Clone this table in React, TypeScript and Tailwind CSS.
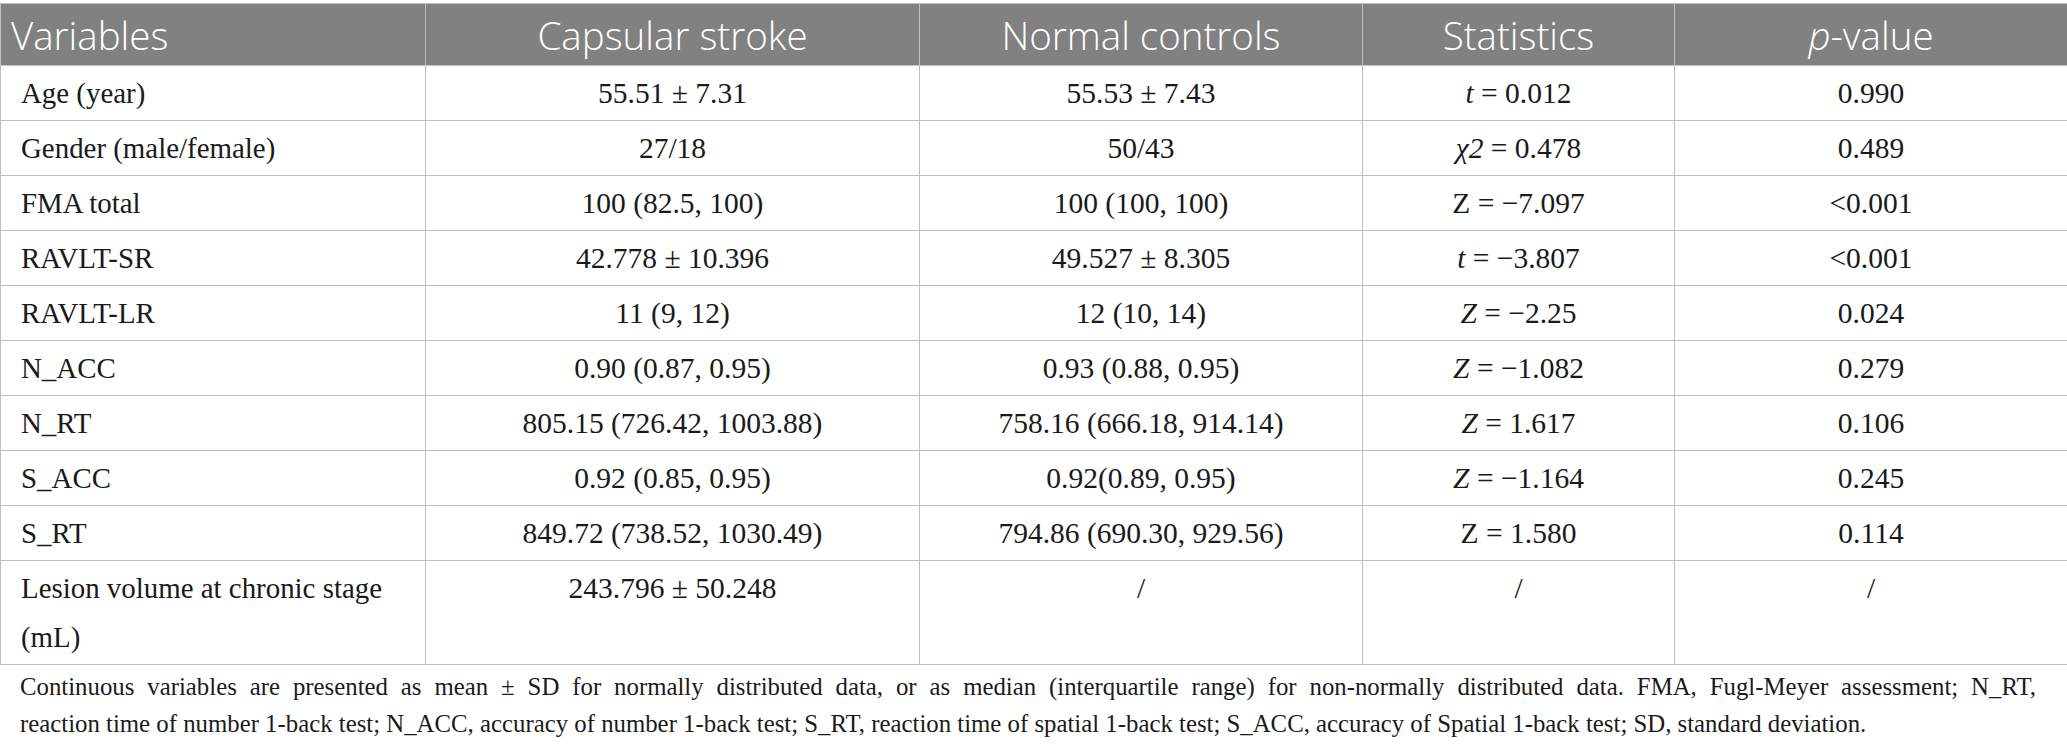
import React from "react";

type Row = { v: React.ReactNode; a: string; b: string; s: React.ReactNode; p: string };

const Ital = ({ children }: { children: React.ReactNode }) => <span className="italic">{children}</span>;

const rows: Row[] = [
  { v: "Age (year)", a: "55.51 ± 7.31", b: "55.53 ± 7.43", s: <><Ital>t</Ital> = 0.012</>, p: "0.990" },
  { v: "Gender (male/female)", a: "27/18", b: "50/43", s: <><Ital>χ2</Ital> = 0.478</>, p: "0.489" },
  { v: "FMA total", a: "100 (82.5, 100)", b: "100 (100, 100)", s: <>Z = −7.097</>, p: "<0.001" },
  { v: "RAVLT-SR", a: "42.778 ± 10.396", b: "49.527 ± 8.305", s: <><Ital>t</Ital> = −3.807</>, p: "<0.001" },
  { v: "RAVLT-LR", a: "11 (9, 12)", b: "12 (10, 14)", s: <><Ital>Z</Ital> = −2.25</>, p: "0.024" },
  { v: "N_ACC", a: "0.90 (0.87, 0.95)", b: "0.93 (0.88, 0.95)", s: <><Ital>Z</Ital> = −1.082</>, p: "0.279" },
  { v: "N_RT", a: "805.15 (726.42, 1003.88)", b: "758.16 (666.18, 914.14)", s: <><Ital>Z</Ital> = 1.617</>, p: "0.106" },
  { v: "S_ACC", a: "0.92 (0.85, 0.95)", b: "0.92(0.89, 0.95)", s: <><Ital>Z</Ital> = −1.164</>, p: "0.245" },
  { v: "S_RT", a: "849.72 (738.52, 1030.49)", b: "794.86 (690.30, 929.56)", s: <>Z = 1.580</>, p: "0.114" },
  { v: "Lesion volume at chronic stage (mL)", a: "243.796 ± 50.248", b: "/", s: "/", p: "/" },
];

export default function App() {
  const th = "border border-[#bfbfbf] h-[62px] align-middle font-light text-white text-[38.5px] leading-[42px]";
  const td = "border border-[#bfbfbf] align-top pt-[3px] pb-[2px] leading-[49px] text-[#1a1a1a]";
  return (
    <div className="w-[2067px] bg-white pt-[3px]">
      <table className="w-[2067px] table-fixed border-collapse">
        <colgroup>
          <col className="w-[425px]" />
          <col className="w-[494px]" />
          <col className="w-[443px]" />
          <col className="w-[312px]" />
          <col className="w-[393px]" />
        </colgroup>
        <thead>
          <tr className="bg-[#808180] [font-family:'Open_Sans',sans-serif]">
            <th className={`${th} text-left pl-[10px]`}>Variables</th>
            <th className={`${th} text-center`}>Capsular stroke</th>
            <th className={`${th} text-center`}>Normal controls</th>
            <th className={`${th} text-center`}>Statistics</th>
            <th className={`${th} text-center`}>
              <span className="italic">p</span>-value
            </th>
          </tr>
        </thead>
        <tbody className="[font-family:'Liberation_Serif',serif]">
          {rows.map((r, i) => (
            <tr key={i}>
              <td className={`${td} text-left pl-[20px] pr-[10px] text-[28.9px]`}>{r.v}</td>
              <td className={`${td} text-center text-[29.5px]`}>{r.a}</td>
              <td className={`${td} text-center text-[29.5px]`}>{r.b}</td>
              <td className={`${td} text-center text-[29.5px]`}>{r.s}</td>
              <td className={`${td} text-center text-[29.5px]`}>{r.p}</td>
            </tr>
          ))}
        </tbody>
      </table>
      <div className="pl-[20px] pr-[31px] pt-[3px] text-[24.8px] leading-[37px] text-[#1a1a1a] [font-family:'Liberation_Serif',serif]">
        <div className="text-justify [text-align-last:justify]">
          Continuous variables are presented as mean ± SD for normally distributed data, or as median (interquartile range) for non-normally distributed data. FMA, Fugl-Meyer assessment; N_RT,
        </div>
        <div className="whitespace-nowrap">
          reaction time of number 1-back test; N_ACC, accuracy of number 1-back test; S_RT, reaction time of spatial 1-back test; S_ACC, accuracy of Spatial 1-back test; SD, standard deviation.
        </div>
      </div>
    </div>
  );
}
